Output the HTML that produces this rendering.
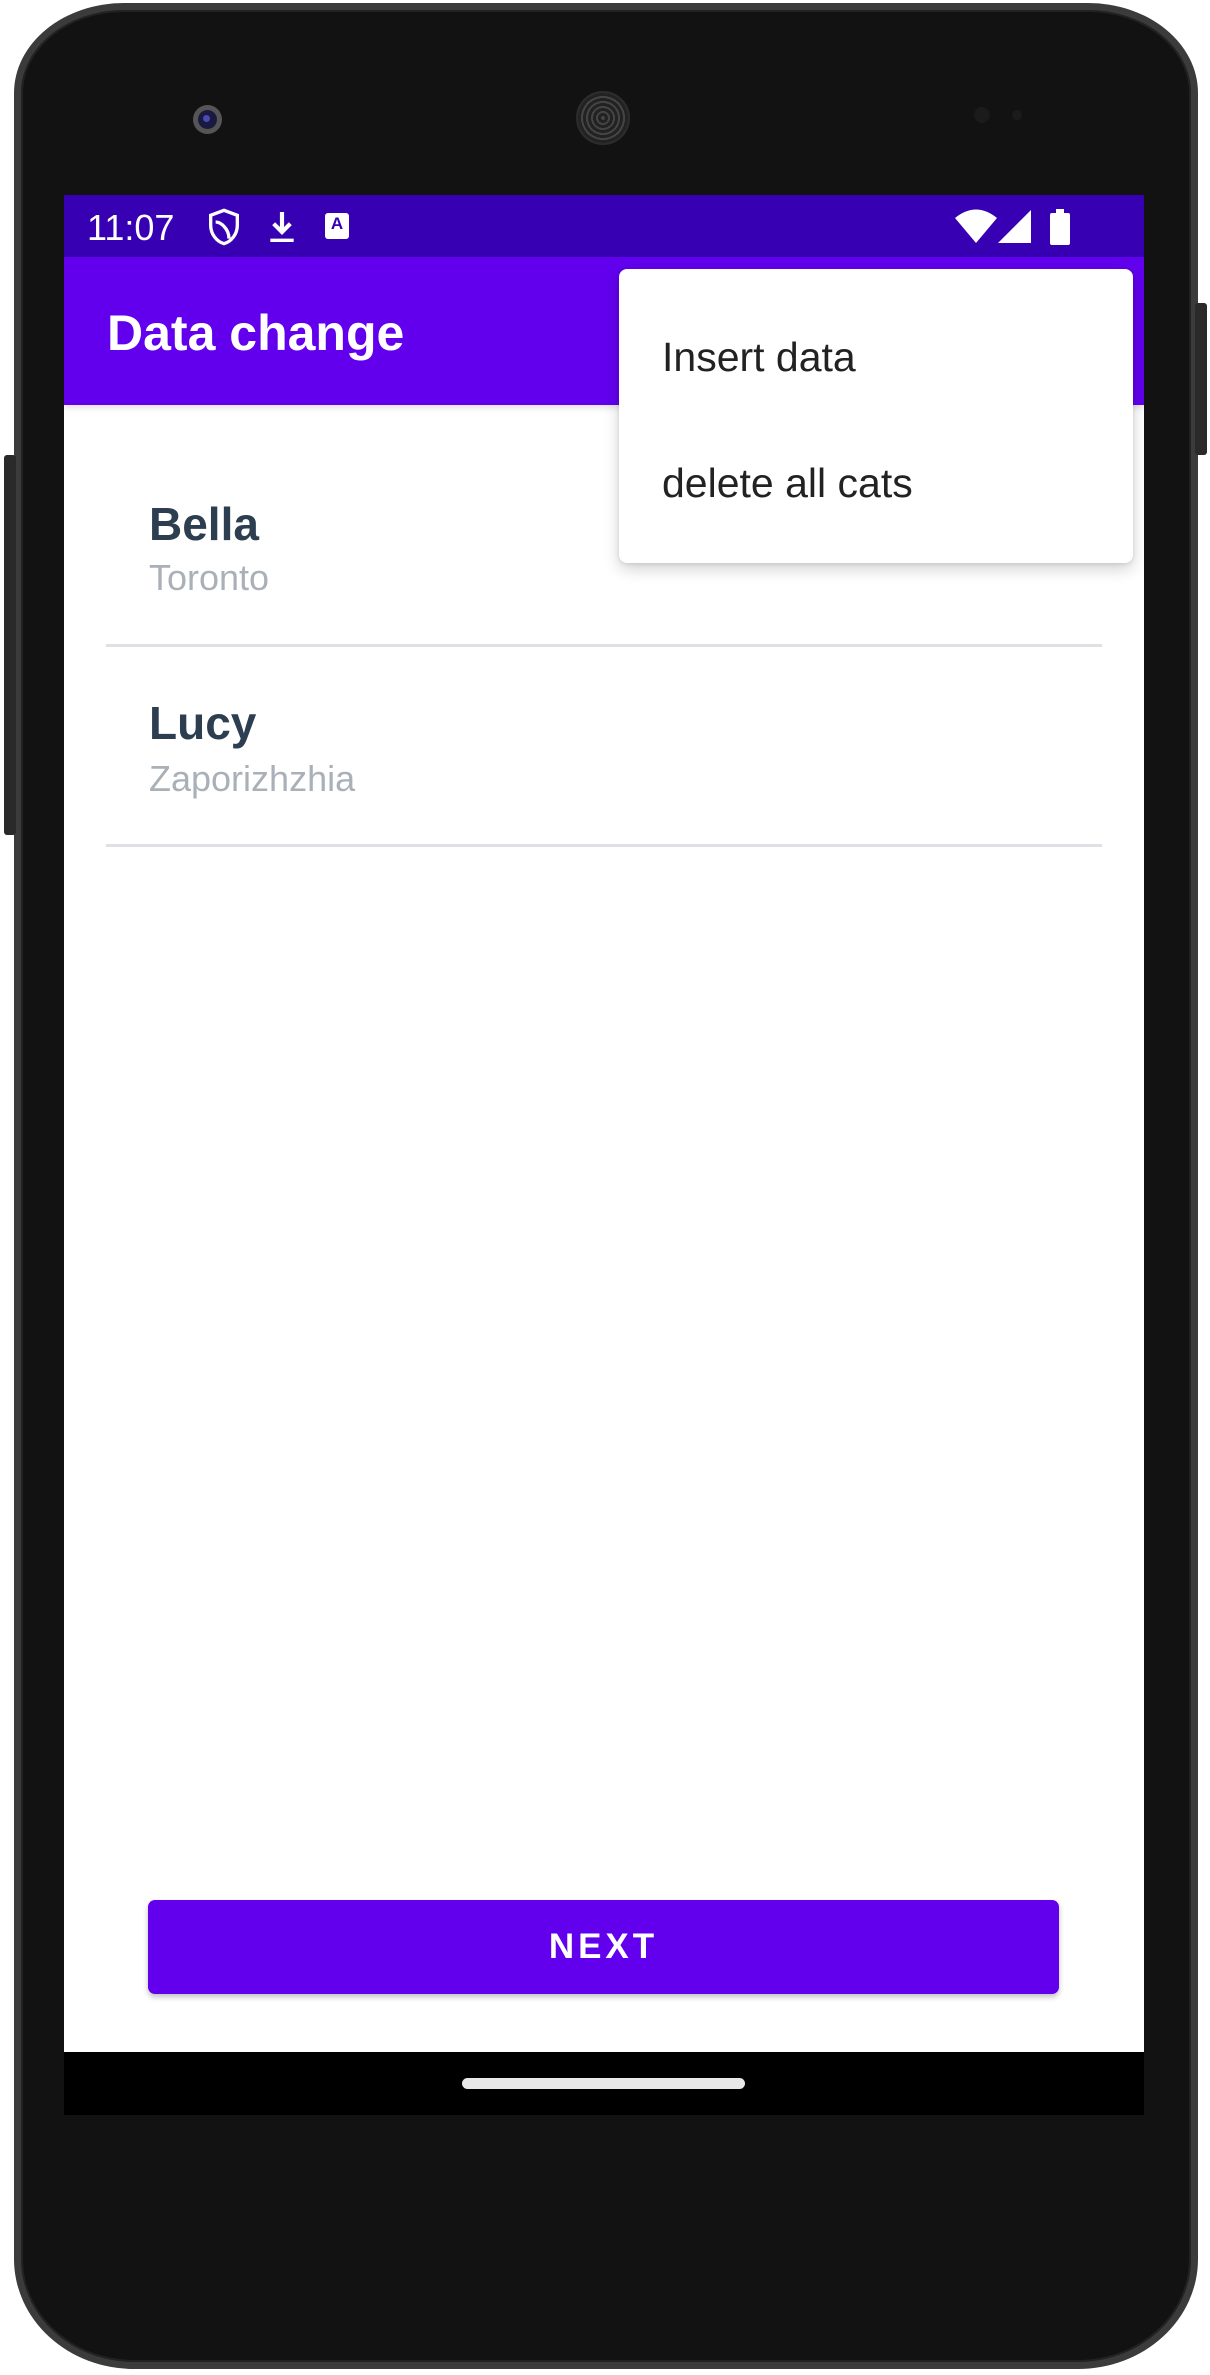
<!DOCTYPE html>
<html><head><meta charset="utf-8"><style>
*{margin:0;padding:0;box-sizing:border-box}
body{width:1210px;height:2375px;background:#fff;position:relative;overflow:hidden;font-family:"Liberation Sans",Roboto,sans-serif}
.abs{position:absolute}
.phone{left:14px;top:3px;width:1184px;height:2366px;background:#121212;border-radius:110px 110px 120px 120px/90px 90px 110px 110px;border:7px solid #3b3b3b;box-shadow:inset 0 0 0 2px #222}
.btn-side{background:#2a2a2a;border-radius:3px}
.screen{left:64px;top:195px;width:1080px;height:1920px;background:#fff;overflow:hidden}
</style></head><body>
<div class="abs phone"></div>
<div class="abs btn-side" style="left:1195px;top:303px;width:12px;height:152px"></div>
<div class="abs btn-side" style="left:4px;top:455px;width:12px;height:380px"></div>
<div class="abs" style="left:193px;top:105px;width:29px;height:29px;border-radius:50%;background:#555;"></div>
<div class="abs" style="left:198px;top:110px;width:19px;height:19px;border-radius:50%;background:#1a1a40;"></div>
<div class="abs" style="left:203px;top:115px;width:7px;height:7px;border-radius:50%;background:#4a4ab0;"></div>
<div class="abs" style="left:576px;top:91px;width:54px;height:54px;border-radius:50%;background:repeating-radial-gradient(circle,#444 0 2px,#222 2px 5px);border:2px solid #2c2c2c"></div>
<div class="abs" style="left:974px;top:107px;width:16px;height:16px;border-radius:50%;background:#1b1b1b"></div>
<div class="abs" style="left:1012px;top:110px;width:10px;height:10px;border-radius:50%;background:#1b1b1b"></div>

<div class="abs screen">
  <div class="abs" style="left:0;top:0;width:1080px;height:62px;background:#3700b3"></div>
  <div class="abs" style="left:23px;top:11px;color:#fff;font-size:36px;line-height:44px">11:07</div>
  <svg class="abs" style="left:140px;top:12px" width="40" height="40" viewBox="0 0 24 24"><path d="M12 2 4 5v6c0 5 3.4 9.7 8 11 4.6-1.3 8-6 8-11V5z" fill="none" stroke="#fff" stroke-width="2"/><path d="M7 9c3 0 8 4 8 10" fill="none" stroke="#fff" stroke-width="2"/></svg>
  <svg class="abs" style="left:198px;top:12px" width="40" height="40" viewBox="0 0 24 24"><path d="M12 3v11M7 10l5 5 5-5" fill="none" stroke="#fff" stroke-width="2.5"/><path d="M5 20h14" stroke="#fff" stroke-width="2"/></svg>
  <div class="abs" style="left:261px;top:18px;width:24px;height:26px;background:#fff;border-radius:3px;color:#3700b3;font-size:17px;font-weight:bold;text-align:center;line-height:22px">A</div>
  <svg class="abs" style="left:891px;top:14px" width="42" height="34" viewBox="0 0 42 34"><path d="M0 9Q21-8 42 9L21 34Z" fill="#fff"/></svg>
  <svg class="abs" style="left:934px;top:15px" width="33" height="33"><path d="M33 0V33H0Z" fill="#fff"/></svg>
  <div class="abs" style="left:986px;top:18px;width:20px;height:32px;background:#fff;border-radius:2px"></div>
  <div class="abs" style="left:992px;top:14px;width:8px;height:5px;background:#fff"></div>

  <div class="abs" style="left:0;top:62px;width:1080px;height:148px;background:#6200ee;box-shadow:0 3px 6px rgba(0,0,0,.12)"></div>
  <div class="abs" style="left:43px;top:108px;color:#fff;font-size:50px;font-weight:bold;line-height:60px">Data change</div>

  <div class="abs" style="left:85px;top:302px;color:#2c3e50;font-size:46px;font-weight:bold;line-height:54px">Bella</div>
  <div class="abs" style="left:85px;top:361px;color:#a9b0b8;font-size:36px;line-height:44px">Toronto</div>
  <div class="abs" style="left:42px;top:449px;width:996px;height:3px;background:#dfe1e4"></div>
  <div class="abs" style="left:85px;top:501px;color:#2c3e50;font-size:46px;font-weight:bold;line-height:54px">Lucy</div>
  <div class="abs" style="left:85px;top:562px;color:#a9b0b8;font-size:36px;line-height:44px">Zaporizhzhia</div>
  <div class="abs" style="left:42px;top:649px;width:996px;height:3px;background:#dfe1e4"></div>

  <div class="abs" style="left:555px;top:74px;width:514px;height:294px;background:#fff;border-radius:8px;box-shadow:0 6px 16px rgba(0,0,0,.18),0 1px 4px rgba(0,0,0,.1)"></div>
  <div class="abs" style="left:598px;top:138px;color:#222;font-size:41px;line-height:48px">Insert data</div>
  <div class="abs" style="left:598px;top:264px;color:#222;font-size:41px;line-height:48px">delete all cats</div>

  <div class="abs" style="left:84px;top:1705px;width:911px;height:94px;background:#6200ee;border-radius:7px;box-shadow:0 3px 6px rgba(0,0,0,.25);color:#fff;font-size:35px;font-weight:bold;letter-spacing:4px;text-align:center;line-height:94px">NEXT</div>

  <div class="abs" style="left:0;top:1857px;width:1080px;height:63px;background:#000"></div>
  <div class="abs" style="left:398px;top:1883px;width:283px;height:11px;background:#e8e8e8;border-radius:6px"></div>
</div>
</body></html>
